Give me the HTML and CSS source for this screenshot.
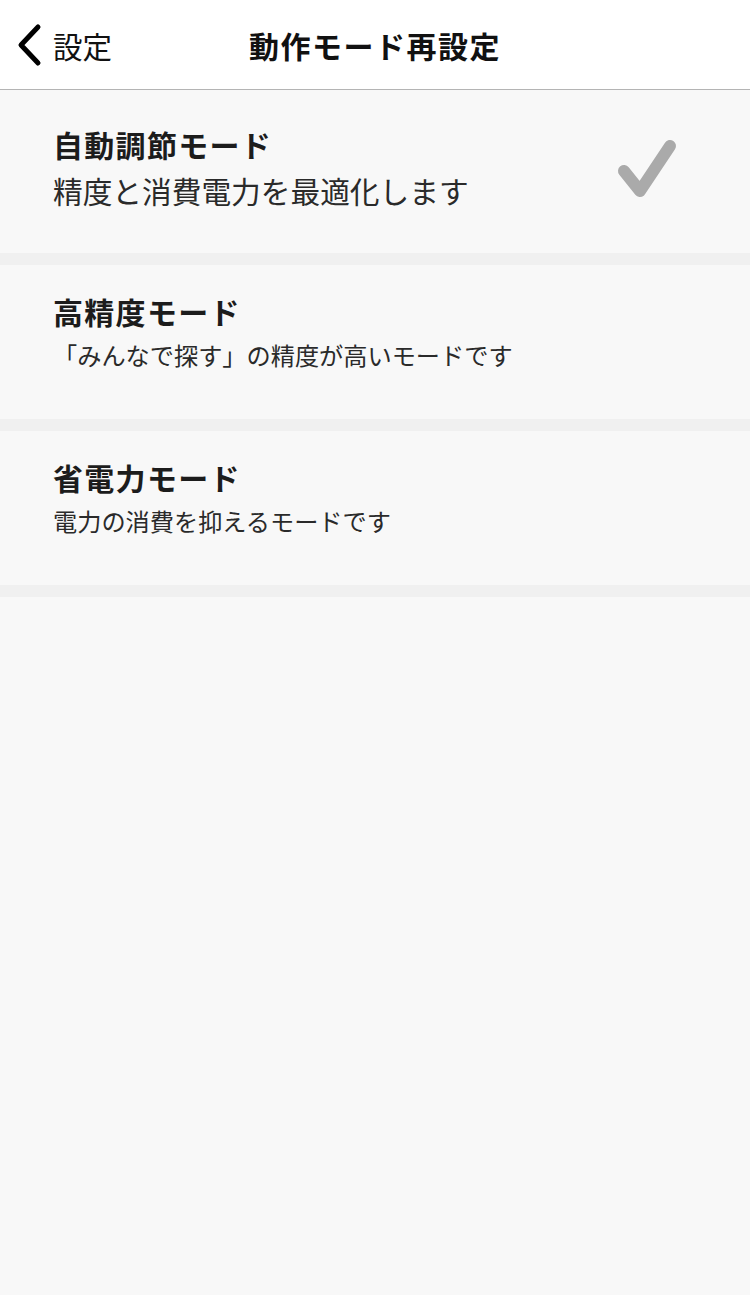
FILE: index.html
```html
<!DOCTYPE html>
<html lang="ja">
<head>
<meta charset="utf-8">
<link rel="stylesheet" href="styles.css">
</head>
<body>
<header class="navbar">
  <div class="back">
    <svg class="chev" width="30" height="50" viewBox="0 0 30 50"><polyline points="22,7 5,25 22,43" fill="none" stroke="#000" stroke-width="5" stroke-linecap="round" stroke-linejoin="round"/></svg>
    <span class="back-label">設定</span>
  </div>
  <h1 class="nav-title">動作モード再設定</h1>
</header>
<main class="list">
  <div class="row row-first">
    <div class="texts">
      <div class="title">自動調節モード</div>
      <div class="desc desc-large">精度と消費電力を最適化します</div>
    </div>
    <svg class="check" width="66" height="66" viewBox="0 0 66 66"><polyline points="11,36 27,56 57,11" fill="none" stroke="#aaaaaa" stroke-width="12" stroke-linecap="round" stroke-linejoin="round"/></svg>
  </div>
  <div class="sep"></div>
  <div class="row">
    <div class="texts">
      <div class="title">高精度モード</div>
      <div class="desc">「みんなで探す」の精度が高いモードです</div>
    </div>
  </div>
  <div class="sep"></div>
  <div class="row">
    <div class="texts">
      <div class="title">省電力モード</div>
      <div class="desc">電力の消費を抑えるモードです</div>
    </div>
  </div>
  <div class="sep"></div>
</main>
</body>
</html>
```
FILE: styles.css
```css
html, body {
  margin: 0;
  padding: 0;
  background: #f8f8f8;
  font-family: "Noto Sans CJK JP", "Noto Sans", sans-serif;
  color: #1c1c1c;
}
.navbar {
  height: 89px;
  background: #ffffff;
  border-bottom: 1px solid #b4b4b4;
  display: flex;
  align-items: center;
  justify-content: center;
  position: relative;
}
.back {
  position: absolute;
  left: 16px;
  top: 20px;
  display: flex;
  align-items: center;
  height: 50px;
}
.chev { display: block; }
.back-label {
  font-size: 29.5px;
  margin-left: 7px;
  color: #111;
  line-height: 50px;
}
.nav-title {
  margin: 0;
  font-size: 30px;
  font-weight: 700;
  letter-spacing: 1.5px;
  color: #111;
}
.list { display: flex; flex-direction: column; }
.row {
  display: flex;
  align-items: center;
  justify-content: space-between;
  padding: 28px 71px 48px 53px;
}
.row-first {
  padding: 36px 71px 44px 53px;
}
.texts { display: flex; flex-direction: column; gap: 10px; }
.row-first .texts { gap: 11px; }
.title {
  font-size: 30px;
  font-weight: 700;
  line-height: 36px;
  letter-spacing: 1.3px;
  color: #1c1c1c;
}
.desc {
  font-size: 24.2px;
  line-height: 32px;
  color: #2a2a2a;
}
.desc-large {
  font-size: 29.7px;
  line-height: 36px;
}
.check { display: block; }
.sep {
  height: 12px;
  background: #f0f0f0;
}
```
